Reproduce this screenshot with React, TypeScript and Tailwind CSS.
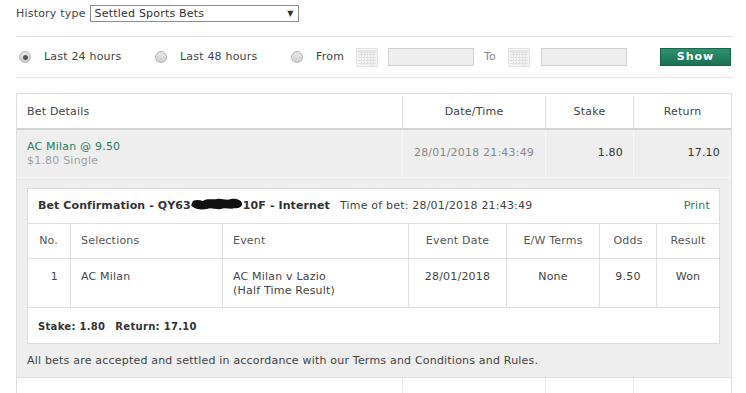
import React from "react";

function Radio({ checked }: { checked?: boolean }) {
  return (
    <span className="inline-flex h-[12px] w-[12px] shrink-0 items-center justify-center rounded-full border border-[#b5b5b5] bg-gradient-to-b from-[#e8e8e8] to-[#d0d0d0]">
      {checked && <span className="h-[5px] w-[5px] rounded-full bg-[#555]" />}
    </span>
  );
}

function CalendarIcon() {
  return (
    <svg width="22" height="19" viewBox="0 0 22 19" className="block shrink-0">
      <rect x="0.5" y="0.5" width="21" height="18" fill="#f4f4f4" stroke="#e2e2e2" />
      <rect x="2" y="2" width="18" height="3" fill="#e6e6e6" />
      {[6, 9, 12, 15].map((y) => (
        <line key={"h" + y} x1="2" x2="20" y1={y + 0.5} y2={y + 0.5} stroke="#e0e0e0" />
      ))}
      {[5, 8, 11, 14, 17].map((x) => (
        <line key={"v" + x} y1="5" y2="17" x1={x + 0.5} x2={x + 0.5} stroke="#e0e0e0" />
      ))}
    </svg>
  );
}

function Redacted() {
  return (
    <svg width="52" height="14" viewBox="0 0 52 14" className="inline-block align-[-2px]">
      <path
        d="M1 6 C2 2 8 3 12 4 C16 1 22 3 26 2 C30 1 36 4 40 2 C45 1 50 3 51 6 C52 9 48 12 44 11 C40 13 34 10 30 12 C25 13 20 10 16 12 C10 13 4 12 2 10 C0 9 0 8 1 6 Z"
        fill="#111"
      />
    </svg>
  );
}

export default function App() {
  const green = "text-[#22805f]";
  return (
    <div
      className="h-[393px] w-[746px] overflow-hidden bg-white pr-[14px] pl-4 text-[11px] tracking-[0.2px] text-[#444]"
      style={{ fontFamily: '"DejaVu Sans", Verdana, sans-serif' }}
    >
      {/* history type */}
      <div className="flex h-[36px] items-start pt-[5px]">
        <span className="mt-[1px] mr-[4px] leading-[16px]">History type</span>
        <div className="flex h-[17px] w-[209px] items-center justify-between border border-[#8e8e8e] px-[4px] leading-none text-[#333]">
          <span>Settled Sports Bets</span>
          <span className="text-[8px] text-[#333]">▼</span>
        </div>
      </div>

      {/* filter row */}
      <div className="-mr-[1px] flex h-[42px] items-center border-y border-[#e3e3e3]">
        <div className="ml-[3px] flex w-[136px] items-center">
          <Radio checked />
          <span className="ml-[13px]">Last 24 hours</span>
        </div>
        <div className="flex w-[136px] items-center">
          <Radio />
          <span className="ml-[13px]">Last 48 hours</span>
        </div>
        <div className="flex items-center">
          <Radio />
          <span className="ml-[13px] w-[40px]">From</span>
        </div>
        <CalendarIcon />
        <div className="ml-[10px] h-[18px] w-[86px] border border-[#cfcfcf] bg-[#eeeeee]" />
        <span className="ml-[10px] w-[24px] text-[#888]">To</span>
        <CalendarIcon />
        <div className="ml-[11px] h-[18px] w-[86px] border border-[#cfcfcf] bg-[#eeeeee]" />
        <button className="mr-[2px] ml-auto flex h-[18px] w-[71px] items-center justify-center border border-[#17664a] bg-gradient-to-b from-[#2f9271] to-[#1b7050] text-[11px] font-bold tracking-[1px] text-white">
          Show
        </button>
      </div>

      {/* bets table */}
      <div className="mt-[15px] border border-[#dedede]">
        <div className="grid h-[36px] grid-cols-[385px_143px_88px_1fr] border-b-2 border-[#d4d4d4] pt-[2px]">
          <div className="flex items-center pl-[10px]">Bet Details</div>
          <div className="flex items-center justify-center border-l border-[#dedede]">Date/Time</div>
          <div className="flex items-center justify-center border-l border-[#dedede]">Stake</div>
          <div className="flex items-center justify-center border-l border-[#dedede]">Return</div>
        </div>

        <div className="grid h-[47px] grid-cols-[385px_143px_88px_1fr] bg-[#eeeeee]">
          <div className="flex flex-col justify-center pl-[10px] leading-[14px]">
            <span className={green}>AC Milan @ 9.50</span>
            <span className="text-[#a0a0a0]">$1.80 Single</span>
          </div>
          <div className="flex items-center justify-center border-l border-[#f6f6f6] text-[#888]">
            28/01/2018 21:43:49
          </div>
          <div className="flex items-center justify-end border-l border-[#f6f6f6] pr-[10px] text-[#333]">
            1.80
          </div>
          <div className="flex items-center justify-end border-l border-[#f6f6f6] pr-[11px] text-[#333]">
            17.10
          </div>
        </div>

        {/* expanded confirmation */}
        <div className="border-t border-[#f6f6f6] bg-[#eeeeee] pt-[10px] pr-[11px] pb-[8px] pl-[10px]">
          <div className="border border-[#dcdcdc] bg-white">
            <div className="flex h-[35px] items-center border-b border-[#e0e0e0] pr-[9px] pl-[10px]">
              <span className="font-bold tracking-[0.1px] text-[#333]">
                Bet Confirmation - QY63
                <Redacted />
                10F - Internet
              </span>
              <span className="ml-[10px] text-[#444]">Time of bet: 28/01/2018 21:43:49</span>
              <span className={"ml-auto " + green}>Print</span>
            </div>

            <div className="grid h-[35px] grid-cols-[42px_152px_186px_98px_93px_57px_1fr] border-b border-[#e0e0e0] text-[#555]">
              <div className="flex items-center justify-end pr-[12px]">No.</div>
              <div className="flex items-center border-l border-[#e0e0e0] pl-[10px]">Selections</div>
              <div className="flex items-center border-l border-[#e0e0e0] pl-[10px]">Event</div>
              <div className="flex items-center justify-center border-l border-[#e0e0e0]">Event Date</div>
              <div className="flex items-center justify-center border-l border-[#e0e0e0]">E/W Terms</div>
              <div className="flex items-center justify-center border-l border-[#e0e0e0]">Odds</div>
              <div className="flex items-center justify-center border-l border-[#e0e0e0]">Result</div>
            </div>

            <div className="grid h-[49px] grid-cols-[42px_152px_186px_98px_93px_57px_1fr] border-b border-[#e0e0e0] leading-[14px] text-[#444]">
              <div className="pt-[11px] pr-[12px] text-right">1</div>
              <div className="border-l border-[#e0e0e0] pt-[11px] pl-[10px]">AC Milan</div>
              <div className="border-l border-[#e0e0e0] pt-[11px] pl-[10px]">
                AC Milan v Lazio
                <br />
                (Half Time Result)
              </div>
              <div className="border-l border-[#e0e0e0] pt-[11px] text-center">28/01/2018</div>
              <div className="border-l border-[#e0e0e0] pt-[11px] text-center">None</div>
              <div className="border-l border-[#e0e0e0] pt-[11px] text-center">9.50</div>
              <div className="border-l border-[#e0e0e0] pt-[11px] text-center">Won</div>
            </div>

            <div className="flex h-[35px] items-center pt-[1px] pl-[10px] text-[10px] font-bold tracking-[0.3px] text-[#333]">
              <span>Stake: 1.80</span>
              <span className="ml-[10px]">Return: 17.10</span>
            </div>
          </div>
          <p className="mt-[9px] leading-[16px] text-[#444]">
            All bets are accepted and settled in accordance with our Terms and Conditions and Rules.
          </p>
        </div>

        <div className="grid h-[20px] grid-cols-[385px_143px_88px_1fr] border-t border-[#dedede]">
          <div />
          <div className="border-l border-[#ececec]" />
          <div className="border-l border-[#ececec]" />
          <div className="border-l border-[#ececec]" />
        </div>
      </div>
    </div>
  );
}
